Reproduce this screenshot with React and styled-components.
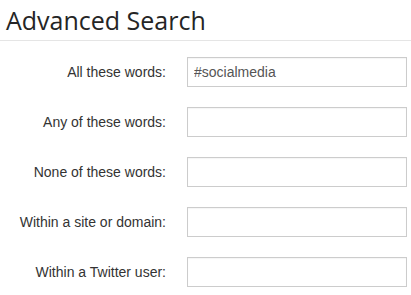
import styled, { createGlobalStyle } from "styled-components";

const GlobalStyle = createGlobalStyle`
  body {
    margin: 0;
    background: #fff;
  }
`;

const Page = styled.div`
  width: 411px;
  height: 295px;
  overflow: hidden;
  font-family: "Liberation Sans", Arial, sans-serif;
`;

const Header = styled.div`
  height: 40px;
  padding-left: 6px;
  border-bottom: 1px solid #e5e5e5;
  display: flex;
  align-items: center;
`;

const Title = styled.h1`
  margin: 0;
  color: #252525;
  font-family: "Open Sans", sans-serif;
  font-size: 25px;
  font-weight: 400;
  line-height: 1;
`;

const Form = styled.form`
  padding-top: 16px;
  display: flex;
  flex-direction: column;
  gap: 20px;
`;

const Row = styled.div`
  display: flex;
  align-items: center;
  gap: 21px;
`;

const Label = styled.label`
  width: 166px;
  text-align: right;
  color: #333;
  font-size: 14px;
`;

const Input = styled.input`
  box-sizing: border-box;
  width: 220px;
  height: 30px;
  padding: 0 6px;
  border: 1px solid #ccc;
  border-radius: 0;
  box-shadow: inset 0 1px 1px rgba(0, 0, 0, 0.04);
  color: #555;
  font-family: "Liberation Sans", Arial, sans-serif;
  font-size: 14px;
  outline: none;
`;

const fields = [
  { label: "All these words:", value: "#socialmedia" },
  { label: "Any of these words:", value: "" },
  { label: "None of these words:", value: "" },
  { label: "Within a site or domain:", value: "" },
  { label: "Within a Twitter user:", value: "" },
];

export default function App() {
  return (
    <Page>
      <GlobalStyle />
      <Header>
        <Title>Advanced Search</Title>
      </Header>
      <Form>
        {fields.map((f) => (
          <Row key={f.label}>
            <Label>{f.label}</Label>
            <Input type="text" defaultValue={f.value} />
          </Row>
        ))}
      </Form>
    </Page>
  );
}
